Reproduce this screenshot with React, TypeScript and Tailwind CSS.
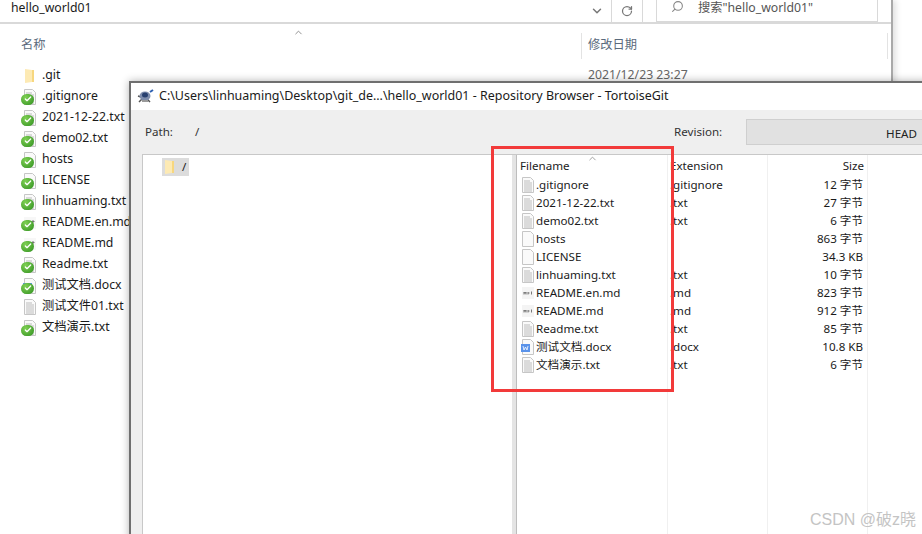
import { Check, ChevronDown, ChevronUp, RotateCw, Search } from "lucide-react";

const uiFont = "font-['Noto_Sans','Noto_Sans_CJK_SC',sans-serif]";

const explorerRows = [
  { name: ".gitignore", icon: "lines", overlay: true },
  { name: "2021-12-22.txt", icon: "lines", overlay: true },
  { name: "demo02.txt", icon: "lines", overlay: true },
  { name: "hosts", icon: "blank", overlay: true },
  { name: "LICENSE", icon: "blank", overlay: true },
  { name: "linhuaming.txt", icon: "lines", overlay: true },
  { name: "README.en.md", icon: "spark", overlay: true },
  { name: "README.md", icon: "spark", overlay: true },
  { name: "Readme.txt", icon: "lines", overlay: true },
  { name: "测试文档.docx", icon: "word", overlay: true },
  { name: "测试文件01.txt", icon: "lines", overlay: false },
  { name: "文档演示.txt", icon: "lines", overlay: true },
];

const browserRows = [
  { name: ".gitignore", icon: "lines", ext: ".gitignore", size: "12 字节" },
  { name: "2021-12-22.txt", icon: "lines", ext: ".txt", size: "27 字节" },
  { name: "demo02.txt", icon: "lines", ext: ".txt", size: "6 字节" },
  { name: "hosts", icon: "blank", ext: "", size: "863 字节" },
  { name: "LICENSE", icon: "blank", ext: "", size: "34.3 KB" },
  { name: "linhuaming.txt", icon: "lines", ext: ".txt", size: "10 字节" },
  { name: "README.en.md", icon: "md", ext: ".md", size: "823 字节" },
  { name: "README.md", icon: "md", ext: ".md", size: "912 字节" },
  { name: "Readme.txt", icon: "lines", ext: ".txt", size: "85 字节" },
  { name: "测试文档.docx", icon: "word", ext: ".docx", size: "10.8 KB" },
  { name: "文档演示.txt", icon: "lines", ext: ".txt", size: "6 字节" },
];

const FileIcon = ({ kind }: { kind: string }) => {
  if (kind === "md") {
    return (
      <svg width="14" height="16" viewBox="0 0 14 16">
        <rect x="1" y="2" width="12" height="12" fill="#f4f4f4" />
        <path d="M3 9.500V7l1 1.500L5 7v2.500M7 7v2.500M7 8h1.500M10.500 6.500v3" stroke="#6a6a6a" strokeWidth=".9" fill="none" />
      </svg>
    );
  }
  if (kind === "spark") {
    return (
      <svg width="14" height="16" viewBox="0 0 14 16">
        <rect x="1" y="2" width="12" height="12" fill="#f7f7f7" />
        <path d="M10 5v3M8.500 6.500h3" stroke="#777" strokeWidth="1" />
      </svg>
    );
  }
  return (
    <svg width="14" height="16" viewBox="0 0 14 16">
      <path d="M1.500 .5h8l3 3v12h-11z" fill="#fafafa" stroke="#c6c6c6" />
      {kind === "lines" && (
        <path d="M3 4h6M3 6h8M3 8h8M3 10h8M3 12h8M3 14h8" stroke="#bcbcbc" strokeWidth="1" />
      )}
      {kind === "word" && (
        <>
          <rect x="0" y="5" width="9" height="8" fill="#5a93ea" />
          <path d="M2 7l1 4 1.500-3 1.500 3 1-4" stroke="#fff" strokeWidth=".8" fill="none" />
        </>
      )}
    </svg>
  );
};

const FolderIcon = () => (
  <svg width="10" height="14" viewBox="0 0 10 14">
    <path d="M0 0l7 1v12l-7 1z" fill="#fdeab4" />
    <path d="M7 1h2v12H7z" fill="#f7d77f" />
  </svg>
);

const StatusOverlay = () => (
  <span className="absolute left-[-1px] top-[5px] flex h-[11px] w-[13px] items-center justify-center rounded-full bg-[radial-gradient(circle_at_35%_30%,#7fd053,#2f8f1f)]">
    <Check size={8} strokeWidth={4} className="text-white" />
  </span>
);

const RepoIcon = () => (
  <svg width="18" height="16" viewBox="0 0 18 16">
    <path d="M2 13l3-3M13 13l-3-3M1 7l3 1" stroke="#555" strokeWidth="1.500" />
    <ellipse cx="8" cy="7" rx="5.500" ry="4.500" fill="#7d8cab" />
    <ellipse cx="8" cy="6" rx="3" ry="2.500" fill="#28406f" />
    <path d="M5 12h6" stroke="#9a9a9a" strokeWidth="2" />
    <path d="M13 3l3-2" stroke="#2d5fb0" strokeWidth="2" />
  </svg>
);

const App = () => {
  return (
    <div className={`relative h-[534px] w-[922px] overflow-hidden bg-white text-[12.25px] text-[#1a1a1a] ${uiFont}`}>
      {/* explorer behind */}
      <div className="flex h-[534px] w-[893px] flex-col border-r-2 border-[#a9a9a9] bg-white shadow-[3px_0_6px_rgba(0,0,0,0.12)]">
        <div className="flex h-[24px] items-start border-b-2 border-[#d9d9d9]">
          <span className="ml-[11px] flex-1 leading-[15px]">hello_world01</span>
          <div className="flex h-[22px] items-center border-r border-[#d9d9d9] pr-[7px]">
            <ChevronDown size={14} strokeWidth={2.5} className="text-[#777]" />
          </div>
          <div className="flex h-[22px] w-[31px] items-center justify-center border-r border-[#d9d9d9]">
            <RotateCw size={12} strokeWidth={2.5} className="text-[#777]" />
          </div>
          <div className="mx-[13px] flex h-[23px] w-[222px] items-start border-x border-b-2 border-[#d9d9d9] pl-[14px]">
            <Search size={13} className="-scale-x-100 text-[#888]" />
            <span className="ml-[14px] leading-[15px] text-[#555]">搜索"hello_world01"</span>
          </div>
        </div>
        <div className="relative flex h-[41px] items-center pl-[21px] pt-[2px] text-[#5a6a7c]">
          <span className="w-[560px]">名称</span>
          <span className="flex h-[26px] w-[307px] items-center border-x border-[#e3e3e3] pl-[6px]">修改日期</span>
          <ChevronUp size={11} className="absolute left-[293px] top-[3px] text-[#888]" />
        </div>
        <div className="flex flex-col pl-[22px]">
          <div className="flex h-[21px] items-center">
            <span className="flex w-[20px] pl-[3px]">
              <FolderIcon />
            </span>
            <span className="w-[546px]">.git</span>
            <span className="text-[#666]">2021/12/23 23:27</span>
          </div>
          {explorerRows.map((row) => (
            <div key={row.name} className="flex h-[21px] items-center">
              <span className="relative flex h-[16px] w-[20px] pl-[1px]">
                <FileIcon kind={row.icon} />
                {row.overlay && <StatusOverlay />}
              </span>
              <span className="whitespace-nowrap">{row.name}</span>
            </div>
          ))}
        </div>
      </div>

      {/* repository browser */}
      <div className="absolute left-[129px] top-[81px] flex h-[460px] w-[800px] flex-col border-2 border-[#6f6f6f] bg-[#efefef] text-[11.6px] shadow-[0_0_8px_rgba(0,0,0,0.3)]">
        <div className="flex h-[27px] items-center gap-[4px] bg-white pl-[6px] text-[12.48px]">
          <RepoIcon />
          <span className="whitespace-nowrap">C:\Users\linhuaming\Desktop\git_de...\hello_world01 - Repository Browser - TortoiseGit</span>
        </div>
        <div className="flex h-[44px] items-center pl-[14px] text-[#333]">
          <span className="w-[50px]">Path:</span>
          <span className="w-[479px]">/</span>
          <span className="w-[72px]">Revision:</span>
          <div className="flex h-[26px] flex-1 items-end justify-end border border-[#cfcfcf] bg-[#e1e1e1] pb-[2px] pr-[9px] text-[#222]">
            HEAD
          </div>
        </div>
        <div className="ml-[11px] flex flex-1 border-t border-[#c8c8c8]">
          <div className="w-[370px] border-l border-[#c8c8c8] bg-white pl-[19px] pt-[3px]">
            <div className="flex h-[18px] w-[27px] items-center gap-[7px] bg-[#dcdcdc] pl-[3px]">
              <FolderIcon />
              <span>/</span>
            </div>
          </div>
          <div className="w-[5px] border-r border-[#bdbdbd] bg-[#e4e4e4]" />
          <div className="flex flex-1 bg-white">
            <div className="relative w-[151px] border-r border-[#f0f0f0]">
              <div className="flex h-[21px] items-end pb-[2px] pl-[3px] text-[#222]">Filename</div>
              <ChevronUp size={11} className="absolute left-[70px] top-[-2px] text-[#999]" />
              {browserRows.map((row) => (
                <div key={row.name} className="flex h-[18px] items-center gap-[1px] whitespace-nowrap pl-[4px]">
                  <FileIcon kind={row.icon} />
                  {row.name}
                </div>
              ))}
            </div>
            <div className="w-[100px] border-r border-[#f0f0f0]">
              <div className="flex h-[21px] items-end pb-[2px] pl-[2px] text-[#222]">Extension</div>
              {browserRows.map((row) => (
                <div key={row.name} className="flex h-[18px] items-center pl-[2px]">{row.ext}</div>
              ))}
            </div>
            <div className="w-[100px] border-r border-[#f0f0f0]">
              <div className="flex h-[21px] items-end justify-end pb-[2px] pr-[3px] text-[#222]">Size</div>
              {browserRows.map((row) => (
                <div key={row.name} className="flex h-[18px] items-center justify-end pr-[4px]">{row.size}</div>
              ))}
            </div>
          </div>
        </div>
      </div>

      {/* annotation + watermark */}
      <div className="absolute left-[491px] top-[146px] h-[246px] w-[183px] border-[3px] border-[#f23a3a]" />
      <span className="absolute left-[810px] top-[508px] font-['Liberation_Sans','Noto_Sans_CJK_SC',sans-serif] text-[16px] text-[#c4c4c4]">CSDN @破z晓</span>
    </div>
  );
};

export default App;
